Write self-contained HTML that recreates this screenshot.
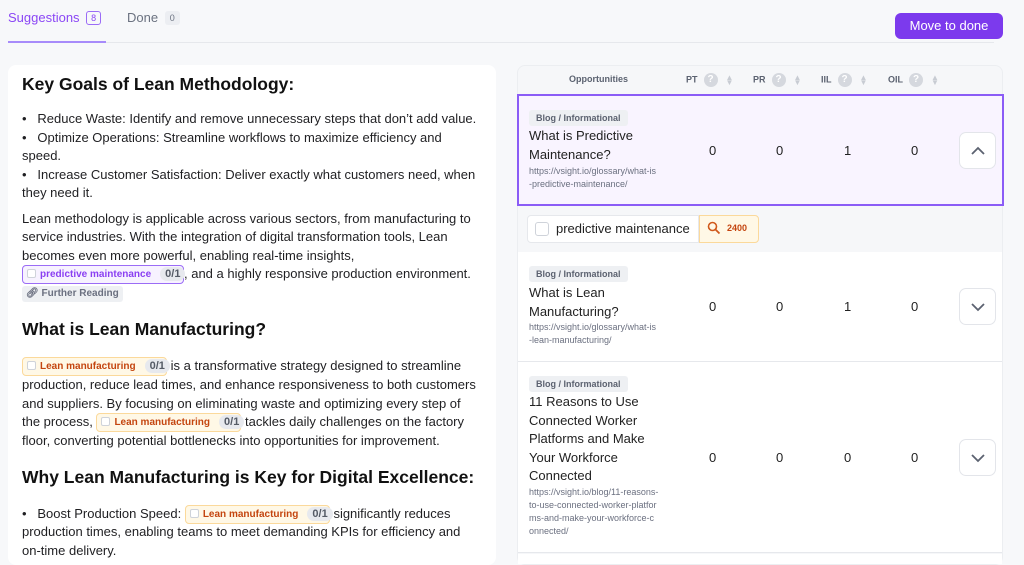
<!DOCTYPE html>
<html><head><meta charset="utf-8"><style>
*{margin:0;padding:0;box-sizing:border-box}
body{width:1024px;height:561px;overflow:hidden;background:#f7f8fa;font-family:"Liberation Sans",sans-serif;color:#1f1f22;position:relative}
.a{position:absolute;white-space:nowrap}
.t{font-size:13px;line-height:18px}
.h{font-size:17.5px;font-weight:bold;color:#111}
.chip{display:inline-block;vertical-align:middle;height:19px;border-radius:4px;padding:0 3px 0 4px;font-size:10px;font-weight:bold;line-height:17px}
.chip .cb{display:inline-block;width:9px;height:9px;border:1px solid #cfd3da;border-radius:2px;vertical-align:-1px;margin-right:4px;background:#fff}
.chip .n{display:inline-block;background:#e7e9ee;color:#555b66;border-radius:7px;padding:0 5px;margin-left:9px;font-size:11px;line-height:14px}
.pm{border:1.5px solid #9b6cf6;background:#f7f2ff;color:#8a3ff2}
.lm{border:1.5px solid #fbd99b;background:#fff8e6;color:#c4450f}
.q{display:inline-block;width:14px;height:14px;border-radius:50%;background:#d5d8de;color:#fff;font-size:10px;line-height:14px;text-align:center;font-weight:bold;vertical-align:middle;margin-left:6px}
.s{display:inline-block;color:#c8ccd3;font-size:8px;line-height:5px;vertical-align:middle;margin-left:8px;text-align:center}
.tag{background:#eef0f3;color:#5c6270;font-size:9px;font-weight:bold;border-radius:3px;padding:0 7px;height:16px;line-height:16px}
.tt{font-size:13px;line-height:18.5px;color:#222}
.url{font-size:9px;line-height:13px;color:#6b7080}
.v{font-size:13px;color:#222}
.btn{width:37px;height:37px;border:1px solid #e3e5ea;border-radius:7px;background:#fff;display:flex;align-items:center;justify-content:center}
</style></head><body>
<div class="a" style="left:8px;top:10px;font-size:13px;color:#8b47f5">Suggestions <span style="display:inline-block;border:1.5px solid #9b6cf6;border-radius:3px;font-size:9px;padding:0 4px;line-height:12px;vertical-align:1px;margin-left:3px">8</span></div>
<div class="a" style="left:127px;top:10px;font-size:13px;color:#6b7280">Done <span style="display:inline-block;background:#eceef2;border-radius:3px;font-size:9px;padding:1px 5px;line-height:12px;vertical-align:1px;margin-left:3px">0</span></div>
<div class="a" style="left:8px;top:41px;width:98px;height:2px;background:#a78bfa"></div>
<div class="a" style="left:106px;top:42px;width:888px;height:1px;background:#e6e8ec"></div>
<div class="a" style="left:895px;top:13px;width:108px;height:26px;background:#7c3aed;border-radius:6px;color:#fff;font-size:13px;line-height:26px;text-align:center">Move to done</div>

<div class="a" style="left:8px;top:65px;width:488px;height:500px;background:#fff;border-radius:8px"></div>
<div class="a h" style="left:22px;top:74px">Key Goals of Lean Methodology:</div>
<div class="a t" style="left:22px;top:110px">•&nbsp;&nbsp; Reduce Waste: Identify and remove unnecessary steps that don’t add value.</div>
<div class="a t" style="left:22px;top:129px">•&nbsp;&nbsp; Optimize Operations: Streamline workflows to maximize efficiency and</div>
<div class="a t" style="left:22px;top:147px">speed.</div>
<div class="a t" style="left:22px;top:166px">•&nbsp;&nbsp; Increase Customer Satisfaction: Deliver exactly what customers need, when</div>
<div class="a t" style="left:22px;top:184px">they need it.</div>
<div class="a t" style="left:22px;top:210px">Lean methodology is applicable across various sectors, from manufacturing to</div>
<div class="a t" style="left:22px;top:228px">service industries. With the integration of digital transformation tools, Lean</div>
<div class="a t" style="left:22px;top:247px">becomes even more powerful, enabling real-time insights,</div>
<div class="a t" style="left:22px;top:265px"><span class="chip pm" style="width:162px"><span class="cb"></span>predictive maintenance<span class="n">0/1</span></span>, and a highly responsive production environment.</div>
<div class="a" style="left:22px;top:286px;height:16px;background:#eef0f3;border-radius:3px;padding:0 4px;font-size:10px;font-weight:bold;color:#6b7080;line-height:16px">&#x1F517;&#xFE0E; Further Reading</div>
<div class="a h" style="left:22px;top:319px">What is Lean Manufacturing?</div>
<div class="a t" style="left:22px;top:357px"><span class="chip lm" style="width:145px"><span class="cb"></span>Lean manufacturing<span class="n">0/1</span></span> is a transformative strategy designed to streamline</div>
<div class="a t" style="left:22px;top:376px">production, reduce lead times, and enhance responsiveness to both customers</div>
<div class="a t" style="left:22px;top:395px">and suppliers. By focusing on eliminating waste and optimizing every step of</div>
<div class="a t" style="left:22px;top:413px">the process, <span class="chip lm" style="width:145px"><span class="cb"></span>Lean manufacturing<span class="n">0/1</span></span> tackles daily challenges on the factory</div>
<div class="a t" style="left:22px;top:432px">floor, converting potential bottlenecks into opportunities for improvement.</div>
<div class="a h" style="left:22px;top:467px">Why Lean Manufacturing is Key for Digital Excellence:</div>
<div class="a t" style="left:22px;top:505px">•&nbsp;&nbsp; Boost Production Speed: <span class="chip lm" style="width:145px"><span class="cb"></span>Lean manufacturing<span class="n">0/1</span></span> significantly reduces</div>
<div class="a t" style="left:22px;top:523px">production times, enabling teams to meet demanding KPIs for efficiency and</div>
<div class="a t" style="left:22px;top:542px">on-time delivery.</div>

<div class="a" style="left:517px;top:65px;width:486px;height:500px;background:#f6f7f9;border:1px solid #eceef1;border-radius:8px"></div>
<div class="a" style="left:569px;top:74px;font-size:9px;font-weight:bold;color:#5b6270">Opportunities</div>
<div class="a" style="left:686px;top:73px;font-size:9px;font-weight:bold;color:#5b6270">PT<span class="q">?</span><span class="s">▲<br>▼</span></div>
<div class="a" style="left:753px;top:73px;font-size:9px;font-weight:bold;color:#5b6270">PR<span class="q">?</span><span class="s">▲<br>▼</span></div>
<div class="a" style="left:821px;top:73px;font-size:9px;font-weight:bold;color:#5b6270">IIL<span class="q">?</span><span class="s">▲<br>▼</span></div>
<div class="a" style="left:888px;top:73px;font-size:9px;font-weight:bold;color:#5b6270">OIL<span class="q">?</span><span class="s">▲<br>▼</span></div>

<div class="a" style="left:517px;top:94px;width:487px;height:112px;background:#f9f4ff;border:2px solid #8b5cf6"></div>
<div class="a tag" style="left:529px;top:110px">Blog / Informational</div>
<div class="a tt" style="left:529px;top:127px">What is Predictive<br>Maintenance?</div>
<div class="a url" style="left:529px;top:165px">https://vsight.io/glossary/what-is<br>-predictive-maintenance/</div>
<div class="a v" style="left:709px;top:143px">0</div><div class="a v" style="left:776px;top:143px">0</div><div class="a v" style="left:844px;top:143px">1</div><div class="a v" style="left:911px;top:143px">0</div>
<div class="a btn" style="left:959px;top:132px"><svg width="16" height="10" viewBox="0 0 16 10"><path d="M2 8L8 2L14 8" fill="none" stroke="#5b6270" stroke-width="1.8"/></svg></div>

<div class="a" style="left:527px;top:215px;width:172px;height:28px;background:#fff;border:1px solid #e6e8ec;border-radius:4px 0 0 4px"></div>
<div class="a" style="left:535px;top:222px;width:14px;height:14px;border:1px solid #cfd3da;border-radius:3px;background:#fff"></div>
<div class="a" style="left:556px;top:221px;font-size:13px;color:#222">predictive maintenance</div>
<div class="a" style="left:699px;top:215px;width:60px;height:28px;background:#fff8e6;border:1px solid #fbd99b;border-radius:0 4px 4px 0"></div>
<svg class="a" style="left:707px;top:221px" width="14" height="14" viewBox="0 0 14 14"><circle cx="5.5" cy="5.5" r="4" fill="none" stroke="#d0591b" stroke-width="1.6"/><path d="M8.5 8.5L12.5 12.5" stroke="#d0591b" stroke-width="1.8"/></svg>
<div class="a" style="left:727px;top:223px;font-size:9px;font-weight:bold;color:#c4450f">2400</div>

<div class="a" style="left:518px;top:252px;width:484px;height:110px;background:#fff;border-bottom:1px solid #e6e8ec"></div>
<div class="a tag" style="left:529px;top:266px">Blog / Informational</div>
<div class="a tt" style="left:529px;top:284px">What is Lean<br>Manufacturing?</div>
<div class="a url" style="left:529px;top:321px">https://vsight.io/glossary/what-is<br>-lean-manufacturing/</div>
<div class="a v" style="left:709px;top:299px">0</div><div class="a v" style="left:776px;top:299px">0</div><div class="a v" style="left:844px;top:299px">1</div><div class="a v" style="left:911px;top:299px">0</div>
<div class="a btn" style="left:959px;top:288px"><svg width="16" height="10" viewBox="0 0 16 10"><path d="M2 2L8 8L14 2" fill="none" stroke="#5b6270" stroke-width="1.8"/></svg></div>

<div class="a" style="left:518px;top:362px;width:484px;height:191px;background:#fff;border-bottom:1px solid #e6e8ec"></div>
<div class="a tag" style="left:529px;top:376px">Blog / Informational</div>
<div class="a tt" style="left:529px;top:393px">11 Reasons to Use<br>Connected Worker<br>Platforms and Make<br>Your Workforce<br>Connected</div>
<div class="a url" style="left:529px;top:486px">https://vsight.io/blog/11-reasons-<br>to-use-connected-worker-platfor<br>ms-and-make-your-workforce-c<br>onnected/</div>
<div class="a v" style="left:709px;top:450px">0</div><div class="a v" style="left:776px;top:450px">0</div><div class="a v" style="left:844px;top:450px">0</div><div class="a v" style="left:911px;top:450px">0</div>
<div class="a btn" style="left:959px;top:439px"><svg width="16" height="10" viewBox="0 0 16 10"><path d="M2 2L8 8L14 2" fill="none" stroke="#5b6270" stroke-width="1.8"/></svg></div>
<div class="a" style="left:518px;top:554px;width:484px;height:10px;background:#fff"></div>
</body></html>
